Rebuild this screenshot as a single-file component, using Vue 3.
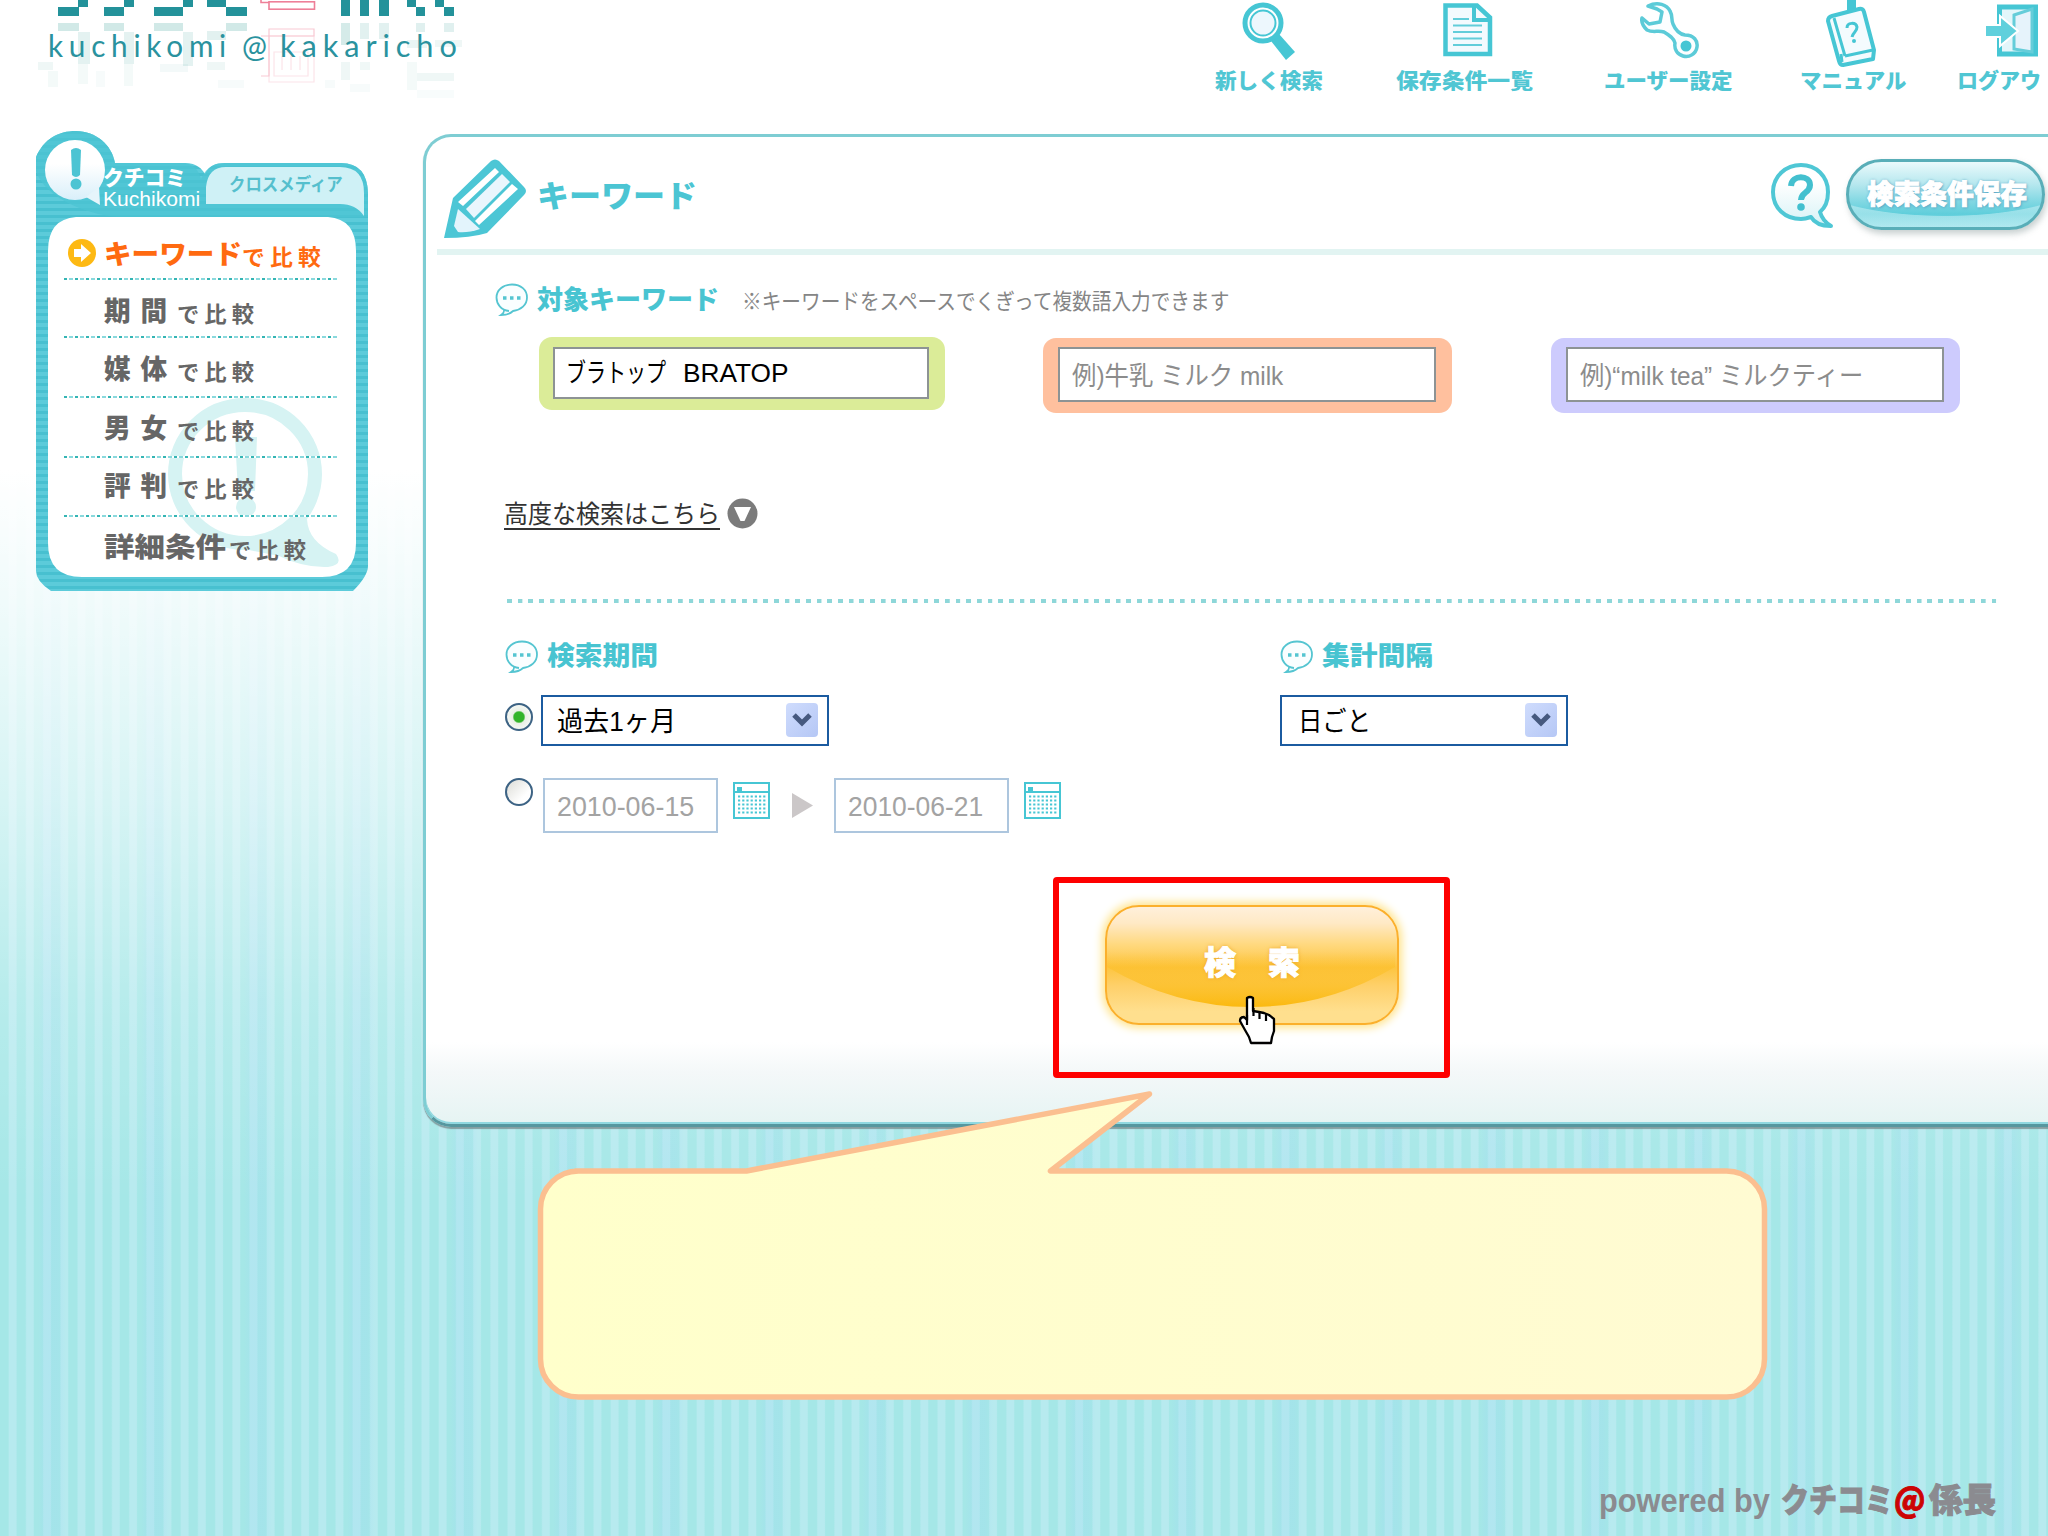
<script setup>
// Condenses or widens an inline label to the given width in pixels.
const vFit = {
  mounted(el, { value }) {
    const natural = el.offsetWidth
    if (!natural) return
    el.style.transform = `scaleX(${value / natural})`
    el.style.marginRight = `${value - natural}px`
  },
}

const menu = [
  { head: 'キーワード', headWidth: 138, tailX: 0, tailWidth: 84, active: true },
  { head: '期間', headWidth: 73, tailX: 0, tailWidth: 82, wide: true },
  { head: '媒体', headWidth: 73, tailX: 0, tailWidth: 82, wide: true },
  { head: '男女', headWidth: 73, tailX: 0, tailWidth: 82, wide: true },
  { head: '評判', headWidth: 73, tailX: 0, tailWidth: 82, wide: true },
  { head: '詳細条件', headWidth: 122, tailX: 3, tailWidth: 82 },
]

const blocks = [
  [58, 7, 21, 9], [78, 0, 10, 7], [104, 7, 20, 9], [124, 0, 10, 7],
  [154, 7, 29, 9], [183, 0, 10, 7], [207, 0, 19, 7], [226, 7, 21, 9],
  [341, 0, 9, 16], [360, 0, 9, 16], [379, 0, 10, 16],
  [407, 0, 9, 7], [416, 7, 9, 9], [435, 0, 9, 7], [444, 7, 10, 9],
]
const mirror = [
  [58, 23, 21, 8, 0.22], [104, 23, 20, 8, 0.22], [154, 23, 29, 8, 0.22], [226, 23, 21, 8, 0.22],
  [78, 32, 12, 32, 0.13], [124, 32, 10, 32, 0.13], [183, 32, 10, 34, 0.13], [207, 31, 19, 9, 0.14],
  [341, 23, 9, 22, 0.2], [360, 23, 9, 16, 0.14], [379, 23, 10, 16, 0.14],
  [407, 40, 20, 8, 0.1], [416, 23, 9, 9, 0.15], [444, 23, 10, 9, 0.15], [435, 40, 27, 7, 0.08],
  [38, 62, 15, 8, 0.08], [48, 71, 10, 16, 0.05], [78, 64, 10, 20, 0.05], [96, 71, 9, 16, 0.04],
  [124, 64, 9, 22, 0.05], [160, 64, 28, 8, 0.06], [207, 62, 18, 8, 0.08], [218, 80, 26, 8, 0.04],
  [341, 62, 9, 18, 0.08], [360, 62, 10, 8, 0.07], [325, 80, 10, 8, 0.04], [350, 84, 20, 8, 0.04],
  [407, 62, 10, 28, 0.05], [417, 73, 37, 8, 0.08], [417, 90, 37, 8, 0.03],
]
</script>

<template>
  <div class="page">
    <header class="top">
      <div class="logo">
        <svg class="logo-art" width="480" height="100" viewBox="0 0 480 100">
          <rect v-for="(b, i) in mirror" :key="'m' + i" :x="b[0]" :y="b[1]" :width="b[2]" :height="b[3]" fill="#2f9c92" :opacity="b[4]" />
          <rect v-for="(b, i) in blocks" :key="i" :x="b[0]" :y="b[1]" :width="b[2]" :height="b[3]" fill="#23929a" />
          <g fill="none" stroke="#ee7f98" stroke-width="1.6">
            <rect x="269" y="1.8" width="45.500" height="7.400" />
            <path d="M261 0v2.500h8" />
          </g>
          <g fill="none" stroke="#f9c9d3" stroke-width="1.200">
            <path d="M269 29h45v7h-45zM261 36h8v40h-8" />
            <path d="M269 36h45v46h-45zM274 52h34v24h-34zM282 56v14M291 56v14M300 56v14" opacity=".5" />
          </g>
        </svg>
        <div class="logo-name">
          <span v-fit="184" class="fit">kuchikomi</span>
          <span v-fit="25" class="fit at">@</span>
          <span v-fit="183" class="fit">kakaricho</span>
        </div>
      </div>
      <nav class="nav">
        <a class="nav-item n1">
          <svg width="56" height="66" viewBox="0 0 56 66">
            <path d="M31 41l8-7 16 18-9 8z" fill="#46c6d4" />
            <circle cx="23" cy="23" r="18" fill="#fff" stroke="#46c6d4" stroke-width="5" />
            <circle cx="23" cy="23" r="12.500" fill="#edf7fd" stroke="#46c6d4" stroke-width="2" />
          </svg>
          <span v-fit="108" class="fit">新しく検索</span>
        </a>
        <a class="nav-item n2">
          <svg width="50" height="66" viewBox="0 0 50 66">
            <path d="M2.500 5.500H34l13 12V54H2.500z" fill="#f3fafe" stroke="#46c6d4" stroke-width="4.500" />
            <path d="M31 5v15h17" fill="none" stroke="#46c6d4" stroke-width="4" />
            <path d="M10 19h16M10 25.500h29M10 32h29M10 38.500h29M10 45h29" stroke="#62cdda" stroke-width="2" />
          </svg>
          <span v-fit="137" class="fit">保存条件一覧</span>
        </a>
        <a class="nav-item n3">
          <svg width="60" height="66" viewBox="0 0 60 66">
            <path d="M8 6c10-5 19-1 22 5 3 5 1 9 3 13 2 5 6 10 12 11 9 0 13 6 12 12-1 7-8 11-14 9-6-2-9-7-8-13-1-5-6-8-11-11-6-2-11 1-17-2C3 26 1 22 2 18l7 6 11-2 2-10-5-3z" fill="#fbfeff" stroke="#5ccbd8" stroke-width="3.500" stroke-linejoin="round" />
            <circle cx="46" cy="46" r="5.500" fill="#46c6d4" />
          </svg>
          <span v-fit="129" class="fit">ユーザー設定</span>
        </a>
        <a class="nav-item n4">
          <svg width="52" height="68" viewBox="0 0 52 68">
            <path d="M22 0h9v10h-9z" fill="#46c6d4" />
            <path d="M7 16L34 9q4-1 5 3l10 38-1 9-30 6q-3 0-4-4L3 21q0-4 4-5z" fill="#f4fbfe" stroke="#46c6d4" stroke-width="4" stroke-linejoin="round" />
            <path d="M9 18l11 38M20 56l28-6M17 62l-1-8" fill="none" stroke="#46c6d4" stroke-width="3" />
            <path d="M22 28c0-6 9-6 10-1 0 5-4 5-5 10" fill="none" stroke="#46c6d4" stroke-width="3" />
            <circle cx="29" cy="41" r="2" fill="#46c6d4" />
          </svg>
          <span v-fit="106" class="fit">マニュアル</span>
        </a>
        <a class="nav-item n5">
          <svg width="54" height="66" viewBox="0 0 54 66">
            <rect x="14.500" y="7" width="36" height="47" fill="#e3f6fa" stroke="#46c6d4" stroke-width="5" />
            <path d="M29 15l18-6v43l-18-3z" fill="#e6f3fb" stroke="#65cdd9" stroke-width="3" />
            <path d="M0 25h15v-9l18 15-18 15v-9H0z" fill="#5fd0dc" stroke="#fff" stroke-width="2" />
          </svg>
          <span v-fit="84" class="fit">ログアウ</span>
        </a>
      </nav>
    </header>

    <div class="body">
      <aside class="side">
        <svg class="side-frame" width="333" height="460" viewBox="0 0 333 460">
          <defs>
            <pattern id="lines" width="8" height="7" patternUnits="userSpaceOnUse">
              <rect width="8" height="7" fill="#5ccbda" /><rect width="8" height="3" fill="#48c0d0" />
            </pattern>
            <linearGradient id="ball" x1="0" y1="0" x2="0" y2="1">
              <stop offset=".4" stop-color="#fff" /><stop offset="1" stop-color="#d9effa" />
            </linearGradient>
          </defs>
          <path d="M0 40V26C8 8 22 0 40 0c20 0 36 14 39 32h70c12 0 17 6 20 11 4-8 10-11 20-11h116q26 0 27 30v373q0 10-15 25H15Q0 450 0 440z" fill="url(#lines)" />
          <path d="M0 40V26C8 8 22 0 40 0c20 0 36 14 39 32h66c12 0 17 6 20 16 6-13 14-16 24-16h116q26 0 27 30v24H85C60 86 10 70 0 40z" fill="#4cc4d3" opacity=".75" />
          <path d="M170 73V56q2-20 20-20h114q24 0 24 26v23q-8-12-24-12z" fill="#cff1f6" />
          <path d="M39 9a30 30 0 1 1 0 60 30 30 0 0 1 0-60z" fill="url(#ball)" />
          <path d="M50 66l14 8-1-18z" fill="#e6f5fb" />
          <path d="M35 19q5-4 10 0l-1 25q-4 4-8 0z" fill="#4cc4d3" />
          <circle cx="40" cy="53" r="5.500" fill="#4cc4d3" />
          <path d="M40 86h252q28 2 28 34v292q0 34-34 34H46q-34 0-34-34V120q0-32 28-34z" fill="#fff" />
          <ellipse cx="209" cy="343" rx="70" ry="69" fill="none" stroke="#d6f3f3" stroke-width="14" />
          <path d="M254 390l17-2Q272 411 300 423 308 434 292 436 268 437 243 425L213 419V405Q240 405 254 390z" fill="#d6f3f3" />
          <path d="M199 306h22l-2 54h-17z" fill="#d6f3f3" />
          <circle cx="210" cy="376" r="10" fill="#d6f3f3" />
        </svg>
        <div class="tabs">
          <div class="tab-on">
            <span v-fit="83" class="fit jp">クチコミ</span>
            <span v-fit="97" class="fit en">Kuchikomi</span>
          </div>
          <span v-fit="114" class="fit tab-off">クロスメディア</span>
        </div>
        <ul class="menu">
          <li v-for="m in menu" :key="m.head" :class="{ active: m.active }">
            <span class="mark">
              <svg v-if="m.active" width="28" height="28" viewBox="0 0 28 28">
                <circle cx="14" cy="14" r="14" fill="#fdb913" />
                <path d="M6 10h7V5l10 9-10 9v-5H6z" fill="#fff" />
              </svg>
            </span>
            <b v-fit="m.headWidth" class="fit head" :class="{ wide: m.wide }">{{ m.head }}</b>
            <span v-fit="m.tailWidth" class="fit tail" :style="{ marginLeft: m.tailX + 'px' }">で比較</span>
          </li>
        </ul>
      </aside>

      <main class="panel">
        <div class="panel-head">
          <svg class="pencil" width="84" height="80" viewBox="0 0 84 80">
            <path d="M0 79L9 39 47 2q4-3 8 0l25 26q4 4 0 8L43 74q-16 5-43 5z" fill="#4cc6d5" />
            <path d="M51 9l-37 34 5 4 36-34zM68 25L31 62l4 4 39-36z" fill="#fff" />
            <path d="M58 15L22 50l8 9 36-36z" fill="#e9f6fd" />
            <path d="M14 50l22 20q-12 4-22 3l-4-6z" fill="#e3f4fc" />
          </svg>
          <h1><span v-fit="160" class="fit">キーワード</span></h1>
          <svg class="help" width="62" height="66" viewBox="0 0 62 66">
            <defs>
              <linearGradient id="hg" x1="0" y1="0" x2="0" y2="1"><stop offset=".3" stop-color="#fff" /><stop offset="1" stop-color="#d6f2f6" /></linearGradient>
            </defs>
            <path d="M49 50C55 45 57 37 57 30 57 14 45 3 30 3S2 14 2 30s12 27 28 27c4 0 7-1 10-2 4 7 11 9 20 9-5-3-9-7-11-14z" fill="url(#hg)" stroke="#4fc7d5" stroke-width="4" stroke-linejoin="round" />
            <path d="M20 24c1-12 19-11 19-1 0 8-9 7-9 15" fill="none" stroke="#43c0cf" stroke-width="6" />
            <circle cx="30" cy="45" r="3.800" fill="#43c0cf" />
          </svg>
          <button class="save"><span v-fit="160" class="fit">検索条件保存</span></button>
        </div>
        <div class="rule"></div>

        <div class="heading kw">
          <svg class="bubble" width="34" height="34" viewBox="0 0 34 34">
            <path d="M14 28C6 27 1.500 21 1.500 14.500 1.500 7 8 1.500 17 1.500S32 7 32 14.500 26 27 18 28c-3 3-7 4-12 4 3-2 3-3 3-5" fill="#fafeff" stroke="#55c5d1" stroke-width="1.800" />
            <path d="M8 15h3.500M15 15h3.500M22 15h3.500" stroke="#55c5d1" stroke-width="3.500" />
          </svg>
          <h2><span v-fit="182" class="fit">対象キーワード</span></h2>
          <p><span v-fit="487" class="fit">※キーワードをスペースでくぎって複数語入力できます</span></p>
        </div>

        <div class="fields">
          <div class="field green">
            <div class="box"><span v-fit="100" class="fit">ブラトップ</span><span v-fit="106" class="fit brand">BRATOP</span></div>
          </div>
          <div class="field orange">
            <div class="box"><span v-fit="211" class="fit">例)牛乳 ミルク milk</span></div>
          </div>
          <div class="field purple">
            <div class="box"><span v-fit="283" class="fit">例)“milk tea” ミルクティー</span></div>
          </div>
        </div>

        <div class="more">
          <a><span v-fit="216" class="fit">高度な検索はこちら</span></a>
          <svg width="31" height="31" viewBox="0 0 31 31">
            <circle cx="15.500" cy="15.500" r="15" fill="#7b7b7b" />
            <path d="M7 9h17l-6.500 14h-4z" fill="#fff" />
          </svg>
        </div>

        <div class="dots"></div>

        <div class="options">
          <section class="period">
            <div class="heading">
              <svg class="bubble" width="34" height="34" viewBox="0 0 34 34">
                <path d="M14 28C6 27 1.500 21 1.500 14.500 1.500 7 8 1.500 17 1.500S32 7 32 14.500 26 27 18 28c-3 3-7 4-12 4 3-2 3-3 3-5" fill="#fafeff" stroke="#55c5d1" stroke-width="1.800" />
                <path d="M8 15h3.500M15 15h3.500M22 15h3.500" stroke="#55c5d1" stroke-width="3.500" />
              </svg>
              <h2><span v-fit="111" class="fit">検索期間</span></h2>
            </div>
            <div class="row">
              <span class="radio on"></span>
              <div class="select"><span v-fit="119" class="fit">過去1ヶ月</span><i><svg width="20" height="14" viewBox="0 0 20 14"><path d="M2 2l8 8 8-8" fill="none" stroke="#46597f" stroke-width="5" /></svg></i></div>
            </div>
            <div class="row dates">
              <span class="radio"></span>
              <div class="date"><span v-fit="137" class="fit">2010-06-15</span></div>
              <svg class="cal" width="37" height="37" viewBox="0 0 37 37">
                <rect x="1" y="1" width="35" height="35" fill="#fff" stroke="#46c6d4" stroke-width="2" />
                <path d="M1 10h35" stroke="#46c6d4" stroke-width="2" /><path d="M4 5h5v4H4z" fill="#46c6d4" />
                <path d="M5 14.500h28M5 18.500h28M5 22.500h28M5 26.500h28M5 30.500h28" stroke="#46c6d4" stroke-width="2" stroke-dasharray="2.200 2" />
              </svg>
              <svg class="arrow" width="21" height="25" viewBox="0 0 21 25"><path d="M0 0l21 12.500L0 25z" fill="#cbc7c8" /></svg>
              <div class="date"><span v-fit="135" class="fit">2010-06-21</span></div>
              <svg class="cal" width="37" height="37" viewBox="0 0 37 37">
                <rect x="1" y="1" width="35" height="35" fill="#fff" stroke="#46c6d4" stroke-width="2" />
                <path d="M1 10h35" stroke="#46c6d4" stroke-width="2" /><path d="M4 5h5v4H4z" fill="#46c6d4" />
                <path d="M5 14.500h28M5 18.500h28M5 22.500h28M5 26.500h28M5 30.500h28" stroke="#46c6d4" stroke-width="2" stroke-dasharray="2.200 2" />
              </svg>
            </div>
          </section>
          <section>
            <div class="heading">
              <svg class="bubble" width="34" height="34" viewBox="0 0 34 34">
                <path d="M14 28C6 27 1.500 21 1.500 14.500 1.500 7 8 1.500 17 1.500S32 7 32 14.500 26 27 18 28c-3 3-7 4-12 4 3-2 3-3 3-5" fill="#fafeff" stroke="#55c5d1" stroke-width="1.800" />
                <path d="M8 15h3.500M15 15h3.500M22 15h3.500" stroke="#55c5d1" stroke-width="3.500" />
              </svg>
              <h2><span v-fit="111" class="fit">集計間隔</span></h2>
            </div>
            <div class="row">
              <div class="select day"><span v-fit="73" class="fit">日ごと</span><i><svg width="20" height="14" viewBox="0 0 20 14"><path d="M2 2l8 8 8-8" fill="none" stroke="#46597f" stroke-width="5" /></svg></i></div>
            </div>
          </section>
        </div>

        <button class="go">
          <svg class="go-shine" width="288" height="114" viewBox="0 0 288 114">
            <defs>
              <linearGradient id="sh" x1="0" y1="0" x2="0" y2="1">
                <stop offset=".45" stop-color="#fbbb17" stop-opacity="0" /><stop offset="1" stop-color="#fbb90f" />
              </linearGradient>
            </defs>
            <path d="M0 0h288v60Q220 100 144 100T0 60z" fill="url(#sh)" />
          </svg>
          <span>検</span><span>索</span>
        </button>
      </main>
    </div>

    <div class="highlight"></div>
    <svg class="cursor" width="40" height="50" viewBox="0 0 40 50">
      <path d="M9 3q3-2 6 0v13l6 1 5 1 5 2 5 4v12l-2 6-1 6H13l-2-6-4-7-5-9q0-4 4-4l3 3z" fill="#fff" stroke="#000" stroke-width="2.300" stroke-linejoin="round" />
      <path d="M15.500 13v8M21.500 16v8M28 18v8M9 20v10" stroke="#000" stroke-width="2.200" />
    </svg>
    <svg class="callout" width="1240" height="320" viewBox="0 0 1240 320">
      <defs>
        <linearGradient id="note" x1="0" y1="0" x2="1" y2="0"><stop offset="0" stop-color="#ffffcb" /><stop offset="1" stop-color="#fffbd2" /></linearGradient>
      </defs>
      <path d="M43 91H214L617 14 518 91H1194a38 38 0 0 1 38 38V279a38 38 0 0 1-38 38H46a38 38 0 0 1-38-38V129a38 38 0 0 1 38-38z" transform="translate(-1.500 -2)" fill="url(#note)" stroke="#fbbf90" stroke-width="5.500" stroke-linejoin="round" />
    </svg>

    <footer class="foot">
      <span v-fit="171" class="fit pw">powered by</span>
      <span v-fit="112" class="fit">クチコミ</span>
      <span v-fit="31" class="fit at">@</span>
      <span v-fit="67" class="fit">係長</span>
    </footer>
  </div>
</template>

<style>
body { margin: 0; overflow: hidden; }
</style>

<style scoped>
.page {
  position: relative;
  width: 2048px;
  height: 1536px;
  overflow: hidden;
  font-family: "Liberation Sans", "Noto Sans CJK JP", sans-serif;
  background:
    linear-gradient(180deg, #fff 0, #fff 470px, rgba(255, 255, 255, .84) 600px, rgba(255, 255, 255, .55) 800px, rgba(255, 255, 255, .2) 1000px, rgba(255, 255, 255, 0) 1200px),
    repeating-linear-gradient(90deg, transparent 0 38px, rgba(160, 218, 242, .25) 44px 58px, transparent 66px 103px),
    repeating-linear-gradient(90deg, #a5e7e7 0 8px, #b7eaef 9.500px 16px, #a5e7e7 17.200px);
}
.fit { display: inline-block; white-space: pre; transform-origin: 0 50%; }
h1, h2, p, ul { margin: 0; padding: 0; }
button { padding: 0; font-family: inherit; }

.top { display: flex; height: 131px; }
.logo { width: 1215px; height: 131px; position: relative; flex: none; }
.logo-art { position: absolute; left: 0; top: 0; }
.logo-name {
  position: relative;
  display: flex;
  padding: 23px 0 0 48px;
  font: 31px/44px Lato, sans-serif;
  letter-spacing: 6px;
  color: #2a929e;
}
.logo-name .at { margin-left: 10px; letter-spacing: 0; }
.logo-name .at + .fit { margin-left: 13px; }
.nav { display: flex; }
.nav-item {
  display: flex;
  flex-direction: column;
  align-items: center;
  flex: none;
  font: 900 21px/30px "Noto Sans CJK JP", sans-serif;
  color: #50c6d3;
}
.nav-item svg { display: block; height: 66px; }
.nav-item .fit { margin-top: -2px; }
.n1 { width: 108px; margin-right: 73px; }
.n1 svg { margin-left: -3px; }
.n2 { width: 137px; margin-right: 71px; }
.n2 svg { margin-left: 6px; }
.n3 { width: 129px; margin-right: 67px; }
.n3 svg { margin-left: 2px; }
.n4 { width: 106px; margin-right: 51px; }
.n4 svg { height: 68px; margin-bottom: -2px; margin-left: -4px; }
.n5 { width: 84px; }
.n5 svg { margin-left: 26px; }

.body { display: flex; align-items: flex-start; }
.side { position: relative; width: 333px; height: 460px; margin-left: 36px; flex: none; }
.side-frame { position: absolute; left: 0; top: 0; }
.tabs { position: relative; display: flex; height: 90px; padding-left: 67px; }
.tab-on { width: 126px; padding-top: 34px; color: #fff; }
.tab-on .fit { display: table; }
.jp { font: 900 21px/22px "Noto Sans CJK JP", sans-serif; }
.en { font-size: 20px; line-height: 20px; margin-top: 2px; }
.tab-off { margin-top: 39px; height: 26px; font: 700 18px/26px "Noto Sans CJK JP", sans-serif; color: #55bfcd; }
.menu { position: relative; list-style: none; margin-left: 28px; width: 275px; }
.menu li {
  display: flex;
  align-items: center;
  box-sizing: border-box;
  height: 60px;
  white-space: nowrap;
  color: #666;
  font-family: "Noto Sans CJK JP", sans-serif;
  background: repeating-linear-gradient(90deg, #35b5b4 0 3px, #fff 3px 5px, #8ad9dd 5px 9px, #fff 9px 11px) 0 100% / 100% 2px no-repeat;
}
.menu li:nth-child(1) { height: 59px; padding-top: 5px; }
.menu li:nth-child(2) { height: 58px; padding-top: 1px; }
.menu li:nth-child(4) { padding-bottom: 3px; }
.menu li:nth-child(5) { height: 59px; padding-bottom: 5px; }
.menu li:last-child { background: none; padding-bottom: 3px; }
.menu li.active { color: #ff6a10; }
.mark { width: 41px; height: 28px; margin-left: 4px; margin-right: -5px; }
.head { font-size: 27px; line-height: 40px; font-weight: 900; }
.head.wide { letter-spacing: 10px; }
.tail { font-size: 22px; line-height: 40px; font-weight: 700; padding-top: 4px; letter-spacing: 5px; }

.panel {
  box-sizing: border-box;
  width: 1660px;
  height: 993px;
  margin: 3px 0 0 54px;
  flex: none;
  border: 3px solid #7ecdd3;
  border-bottom: 3px solid #56979f;
  border-radius: 28px;
  box-shadow: 0 2px 1px rgba(120, 140, 142, .8), inset 0 -2px 0 #8fd8e0;
  background: linear-gradient(180deg, #fff 0, #fff 905px, #f4f8f9 935px, #e6f4f3 985px);
}
.panel-head { display: flex; height: 112px; padding: 0 0 0 18px; align-items: flex-start; }
.pencil { margin-top: 22px; }
h1 { width: 1234px; margin: 35px 0 0 9px; font: 900 31px/44px "Noto Sans CJK JP", sans-serif; color: #4bc5d3; }
.help { margin-top: 25px; }
.save {
  width: 199px;
  height: 71px;
  margin: 22px 0 0 13px;
  border: 3px solid #59aeb8;
  border-radius: 36px;
  background:
    radial-gradient(ellipse 140px 40px at 50% 22%, transparent 98%, rgba(220, 246, 249, .45) 100%),
    linear-gradient(180deg, #eafafc 0, #b5e7ee 35%, #7fd7e2 62%, #5fcedb 80%, #8bdde7 100%);
  box-shadow: 2px 4px 6px rgba(120, 140, 140, .4);
  font: 900 27px/48px "Noto Sans CJK JP", sans-serif;
  text-align: left;
  padding: 0 0 3px 18px;
  color: #fff;
  text-shadow: 0 0 3px #5ba5c4, 1px 1px 3px #5ba5c4;
  -webkit-text-stroke: 1px #fff;
}
.rule { height: 6px; margin-left: 11px; background: #e2f4f2; }

.heading { display: flex; align-items: center; height: 34px; color: #48c4d1; }
.heading.kw { margin: 28px 0 0 69px; }
h2 { margin: -4px 0 0 8px; font: 900 26px/34px "Noto Sans CJK JP", sans-serif; }
.options h2 { margin-top: -6px; }
.heading p { margin-left: 23px; margin-top: -4px; font: 400 22px/34px "Noto Sans CJK JP", sans-serif; color: #858585; padding-top: 2px; }

.fields { display: flex; align-items: flex-start; margin: 20px 0 0 113px; }
.field { box-sizing: border-box; border-radius: 13px; flex: none; }
.green { width: 406px; height: 73px; padding: 10px 16px 11px 14px; background: #dbec98; }
.orange { width: 409px; height: 75px; margin: 1px 0 0 98px; padding: 9px 16px 11px 15px; background: #ffc09e; }
.purple { width: 409px; height: 75px; margin: 1px 0 0 99px; padding: 9px 16px 11px 15px; background: #cdcbfd; }
.box {
  box-sizing: border-box;
  height: 100%;
  border: 2px solid #8d9394;
  background: #fff;
  padding-left: 12px;
  color: #8c8c8c;
  font-size: 26px;
  line-height: 55px;
  white-space: nowrap;
}
.green .box { color: #000; line-height: 49px; padding-left: 11px; }
.brand { margin-left: 17px; }

.more { display: flex; align-items: center; margin: 85px 0 0 78px; height: 34px; }
.more a { font-size: 25px; line-height: 28px; height: 28px; color: #333; border-bottom: 2px solid #333; }
.more svg { margin-left: 7px; margin-top: -3px; }
.dots {
  width: 1490px;
  height: 4px;
  margin: 67px 0 0 81px;
  background: repeating-linear-gradient(90deg, #8ed7d9 0 4.500px, transparent 5px 10.680px);
}
.options { display: flex; margin: 37px 0 0 79px; }
.period { width: 775px; }
.heading h2 { white-space: nowrap; }
.row { display: flex; margin-top: 21px; }
.radio {
  box-sizing: border-box;
  width: 28px;
  height: 28px;
  margin-top: 8px;
  border: 2.500px solid #3d6384;
  border-radius: 50%;
  background: linear-gradient(135deg, #dcdcd6, #fff 70%);
}
.radio.on { background: radial-gradient(circle, #32b42a 0 5px, #e9efe6 6.500px, #fff 100%); }
.select {
  box-sizing: border-box;
  display: flex;
  align-items: center;
  width: 288px;
  height: 51px;
  margin-left: 8px;
  padding: 0 9px 2px 14px;
  border: 2px solid #1b5ba0;
  background: #fff;
  font-size: 27px;
  color: #000;
}
.select i {
  display: flex;
  align-items: center;
  justify-content: center;
  width: 32px;
  height: 34px;
  margin-left: auto;
  border-radius: 4px;
  background: linear-gradient(135deg, #cfdcfd, #b5c7f5);
}
.select.day { margin-left: 0; padding-left: 16px; }
.dates { margin-top: 32px; }
.dates .radio { margin-top: 0; }
.date {
  box-sizing: border-box;
  width: 175px;
  height: 55px;
  margin-left: 10px;
  padding-left: 12px;
  border: 2px solid #adc6de;
  background: #fff;
  font: 28px/54px "Liberation Sans", sans-serif;
  color: #a3a3a3;
}
.cal { margin: 4px 0 0 15px; }
.arrow { margin: 15px 0 0 22px; }
.arrow + .date { margin-left: 21px; }

.go {
  position: relative;
  display: flex;
  justify-content: center;
  gap: 32px;
  box-sizing: border-box;
  width: 294px;
  height: 120px;
  margin: 72px 0 0 679px;
  border: 2px solid #fbb02c;
  border-radius: 34px;
  background: linear-gradient(180deg, #fff0db 0, #ffe9c5 14%, #ffd980 32%, #fdc540 52%, #fed06a 68%, #ffdf8e 90%);
  box-shadow: 0 0 8px 3px #ffe48d;
  font: 900 32px/106px "Noto Sans CJK JP", sans-serif;
  color: #fff;
  -webkit-text-stroke: 1px #fff;
  text-shadow: 0 0 4px #e8a020;
}
.go-shine { position: absolute; left: 0; top: 0; }
.go span { position: relative; }

.highlight {
  position: absolute;
  left: 1053px;
  top: 877px;
  width: 385px;
  height: 189px;
  border: 6px solid #fe0000;
  border-radius: 4px;
}
.cursor { position: absolute; left: 1238px; top: 995px; }
.callout { position: absolute; left: 534px; top: 1082px; }
.foot {
  position: absolute;
  left: 1599px;
  top: 1474px;
  display: flex;
  height: 48px;
  font: 900 33px/48px "Noto Sans CJK JP", sans-serif;
  color: #8b8b90;
  -webkit-text-stroke: 1px currentColor;
}
.foot .pw { margin-left: 0; font: 700 34px/52px "Liberation Sans", sans-serif; -webkit-text-stroke: 0; }
.foot .pw + .fit { margin-left: 11px; }
.foot .at { color: #cc0404; margin-left: 1px; }
.foot .at + .fit { margin-left: 4px; }
</style>
